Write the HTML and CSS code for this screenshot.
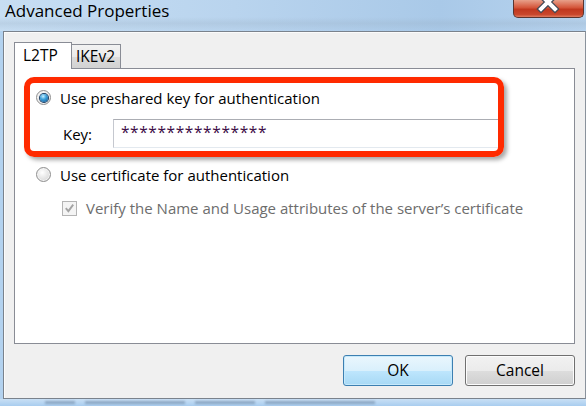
FILE: index.html
```html
<!DOCTYPE html>
<html>
<head>
<meta charset="utf-8">
<link rel="stylesheet" href="styles.css">
</head>
<body>
<div class="window">
  <div class="titlebar">
    <div class="title">Advanced Properties</div>
    <div class="close">
      <svg width="70" height="17" viewBox="0 0 70 17">
        <path d="M28 -4 L42 10 M42 -4 L28 10" stroke="#434a57" stroke-width="6.5" stroke-linecap="square" fill="none"/>
        <path d="M28 -4 L42 10 M42 -4 L28 10" stroke="#ffffff" stroke-width="4" stroke-linecap="square" fill="none"/>
      </svg>
    </div>
  </div>
  <div class="dialog">
    <div class="tabs">
      <div class="tab active">L2TP</div>
      <div class="tab">IKEv2</div>
    </div>
    <div class="panel">
      <div class="highlight">
        <div class="row radio-row">
          <span class="radio checked"><span class="dot"></span></span>
          <span class="label">Use preshared key for authentication</span>
        </div>
        <div class="row key-row">
          <span class="key-label">Key:</span>
          <div class="input">****************</div>
        </div>
      </div>
      <div class="row radio-row second">
        <span class="radio"></span>
        <span class="label">Use certificate for authentication</span>
      </div>
      <div class="row check-row">
        <span class="check">
          <svg width="14" height="14" viewBox="0 0 14 14"><path d="M3 7.2 L5.8 10.4 L11 3.4" stroke="#a3a3a3" stroke-width="2" fill="none"/></svg>
        </span>
        <span class="label disabled">Verify the Name and Usage attributes of the server’s certificate</span>
      </div>
    </div>
    <div class="buttons">
      <div class="btn default">OK</div>
      <div class="btn">Cancel</div>
    </div>
  </div>
  <div class="below">
    <span class="streak s1"></span><span class="streak s2"></span><span class="streak s3"></span><span class="streak s4"></span>
  </div>
</div>
</body>
</html>
```
FILE: styles.css
```css
* { box-sizing: border-box; }
html, body { margin: 0; padding: 0; }
body {
  width: 586px;
  height: 406px;
  overflow: hidden;
  font-family: "Open Sans", "Noto Sans", sans-serif;
  font-size: 15px;
  color: #000;
  background: #b3d2ef;
}
.window { display: flex; flex-direction: column; height: 406px; }
.titlebar {
  height: 31px;
  display: flex;
  justify-content: space-between;
  align-items: flex-start;
  background:
    linear-gradient(180deg, rgba(255,255,255,0) 0%, rgba(255,255,255,0) 55%, rgba(150,170,190,0.25) 75%, rgba(255,255,255,0) 100%),
    linear-gradient(90deg, #c7def3 0%, #b9d4ee 40%, #a9c9e8 75%, #b7d3ee 100%);
}
.title {
  padding-left: 5px;
  font-size: 17px;
  line-height: 21px;
  color: #000;
}
.close {
  width: 71px;
  height: 18px;
  margin-right: 2px;
  border: 1px solid #5a3530;
  border-top: none;
  border-radius: 0 0 5px 5px;
  background: linear-gradient(180deg, #e8a08a 0%, #d4553a 45%, #c1381f 55%, #c9472c 85%, #e07b5f 100%);
  overflow: hidden;
}
.close svg { display: block; margin: -1px 0 0 -1px; }
.dialog {
  margin-left: 3px;
  height: 368px;
  flex: none;
  border: 1px solid #7a828c;
  border-right: 1px solid #8a929c;
  background: #f0f0f0;
  padding: 10px 10px 0 10px;
  display: flex;
  flex-direction: column;
  box-shadow: inset 1px 1px 0 #fbfbfb;
}
.tabs { display: flex; align-items: flex-end; height: 26px; position: relative; z-index: 1; }
.tab {
  border: 1px solid #898c95;
  border-bottom: none;
  font-size: 15.5px;
  height: 24px;
  line-height: 22px;
  padding: 0 7px;
  background: linear-gradient(180deg, #f2f2f2 0%, #ebebeb 50%, #dcdcdc 51%, #d2d2d2 100%);
}
.tab.active {
  height: 27px;
  margin-bottom: -1px;
  background: #fff;
  width: 58px;
  padding: 1px 0 0 8px;
}
.tab + .tab { border-left: none; width: 49px; padding-left: 4px; }
.panel {
  height: 276px;
  background: #fff;
  border: 1px solid #898c95;
  padding: 8px 0 0 9px;
}
.highlight {
  width: 480px;
  height: 80px;
  border: 6px solid #ff2a00;
  border-radius: 10px;
  box-shadow: 3px 3px 4px rgba(0,0,0,0.35);
  padding: 6px 0 0 6px;
}
.row { display: flex; align-items: center; }
.radio-row { height: 17px; }
.radio {
  width: 15px; height: 15px;
  border-radius: 50%;
  border: 1px solid #8f8f8f;
  background: radial-gradient(circle at 40% 35%, #ffffff 0%, #e6e6e6 50%, #cfcfcf 100%);
  box-shadow: inset 0 0 0 1px #f4f4f4;
  display: flex; align-items: center; justify-content: center;
  flex: none;
}
.radio .dot {
  width: 8px; height: 8px; border-radius: 50%;
  background: radial-gradient(circle at 40% 30%, #c7f0ff 0%, #3ea2dc 40%, #0a4f8a 100%);
  box-shadow: 0 0 0 1px #1a3c62;
}
.label { margin-left: 9px; white-space: nowrap; }
.key-row { margin-top: 13px; }
.key-label { margin-left: 27px; width: 50px; padding-top: 0; }
.input {
  width: 386px;
  height: 29px;
  border: 1px solid #c5c8cf;
  border-top-color: #abadb3;
  border-bottom-color: #e3e9ef;
  border-right: none;
  color: #3d0c47;
  padding: 1px 0 0 7px;
  font-size: 15.5px;
  letter-spacing: 0.6px;
  line-height: 22px;
}
.second { margin-top: 9px; margin-left: 12px; }
.check-row { margin-top: 15px; margin-left: 38px; }
.check {
  width: 15px; height: 15px;
  border: 1px solid #b4b4b4;
  background: #f4f4f4;
  display: flex; align-items: center; justify-content: center;
}
.check svg { display: block; }
.label.disabled { color: #6d6d6d; margin-left: 9px; }
.buttons {
  display: flex;
  justify-content: flex-end;
  gap: 12px;
  margin-top: 11px;
}
.btn {
  width: 110px;
  height: 31px;
  border: 1px solid #707070;
  border-radius: 3px;
  text-align: center;
  line-height: 28px;
  font-size: 15.5px;
  background: linear-gradient(180deg, #f2f2f2 0%, #ebebeb 50%, #dddddd 51%, #cfcfcf 100%);
  box-shadow: inset 0 0 0 1px #fcfcfc;
}
.btn.default {
  border-color: #3c7fb1;
  background: linear-gradient(180deg, #eaf6fd 0%, #d9f0fc 50%, #bee6fd 51%, #a7d9f5 100%);
  box-shadow: inset 0 0 0 1px #c6e9fb;
}
.below {
  flex: 1;
  display: flex;
  align-items: center;
  padding-left: 45px;
  gap: 10px;
  background: linear-gradient(180deg, #c9e0f5 0%, #a9cdef 100%);
}
.streak {
  height: 3px;
  background: rgba(60,80,110,0.35);
  filter: blur(1px);
}
.s1 { width: 30px; }
.s2 { width: 100px; }
.s3 { width: 60px; }
.s4 { width: 110px; }
```
